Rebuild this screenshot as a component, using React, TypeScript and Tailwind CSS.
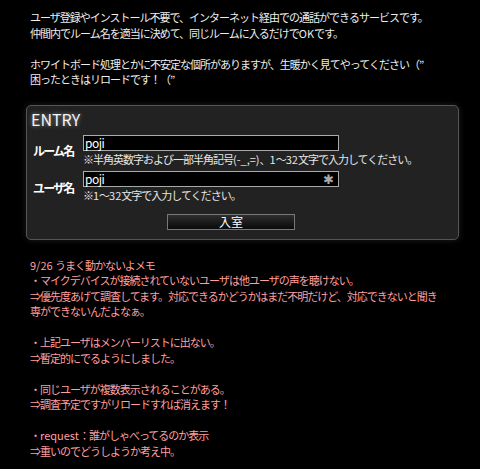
import React from "react";

const topLines = [
  "ユーザ登録やインストール不要で、インターネット経由での通話ができるサービスです。",
  "仲間内でルーム名を適当に決めて、同じルームに入るだけでOKです。",
  "",
  "ホワイトボード処理とかに不安定な個所がありますが、生暖かく見てやってください（”",
  "困ったときはリロードです！（”",
];

const memoLines = [
  "9/26 うまく動かないよメモ",
  "・マイクデバイスが接続されていないユーザは他ユーザの声を聴けない。",
  "⇒優先度あげて調査してます。対応できるかどうかはまだ不明だけど、対応できないと聞き",
  "専ができないんだよなぁ。",
  "",
  "・上記ユーザはメンバーリストに出ない。",
  "⇒暫定的にでるようにしました。",
  "",
  "・同じユーザが複数表示されることがある。",
  "⇒調査予定ですがリロードすれば消えます！",
  "",
  "・request：誰がしゃべってるのか表示",
  "⇒重いのでどうしようか考え中。",
];

function T({ text }: { text: string }) {
  const parts = text.match(/[\x20-\x7e]+|[^\x20-\x7e]+/g) || [];
  return (
    <>
      {parts.map((p, i) =>
        /^[\x20-\x7e]+$/.test(p) ? (
          <span key={i} className="tracking-[0px]">
            {p}
          </span>
        ) : (
          <span key={i}>{p}</span>
        )
      )}
    </>
  );
}

export default function App() {
  return (
    <div className="w-[480px] h-[469px] overflow-hidden bg-black font-['Noto_Sans_CJK_JP',sans-serif] text-[11px] leading-[15.5px] tracking-[-1px]">
      <div className="pt-[10px] pl-[30px] text-[#eeeeee]">
        {topLines.map((l, i) => (
          <div key={i} className="whitespace-nowrap h-[15.5px]">
            <T text={l} />
          </div>
        ))}
      </div>

      <div className="ml-[26px] mt-[17px] w-[433px] h-[135px] rounded-[5px] border border-[#555] bg-[#222] shadow-[0_0_6px_rgba(255,255,255,0.12)] pt-[3px] pl-[6px]">
        <div className="ml-[-2px] h-[20px] leading-[20px] text-[16px] tracking-normal text-[#f4f4f4] [text-shadow:0_0_4px_rgba(255,255,255,0.5)]">
          ENTRY
        </div>
        <div className="mt-[6px] grid grid-cols-[50px_1fr] gap-y-[4px]">
          <div className="flex items-center font-bold text-white text-[12px] tracking-[-1.8px]">ルーム名</div>
          <div className="flex flex-col">
            <div className="w-[256px] h-[16px] border border-[#aaa] bg-black text-white text-[12px] leading-[14px] pl-[1px] tracking-[-0.5px]">
              poji
            </div>
            <div className="mt-[1px] text-[#e6e6e6] whitespace-nowrap">
              <T text="※半角英数字および一部半角記号(-_,=)、1～32文字で入力してください。" />
            </div>
          </div>
          <div className="flex items-center font-bold text-white text-[12px] tracking-[-1.8px]">ユーザ名</div>
          <div className="flex flex-col">
            <div className="relative w-[256px] h-[16px] border border-[#aaa] bg-black text-white text-[12px] leading-[14px] pl-[1px] tracking-[-0.5px]">
              poji
              <span className="absolute right-[5px] top-0 text-[13px] leading-[14px] text-[#aaa]">✱</span>
            </div>
            <div className="mt-[1px] text-[#e6e6e6] whitespace-nowrap">
              <T text="※1～32文字で入力してください。" />
            </div>
          </div>
        </div>
        <div className="mt-[10px] ml-[134px] w-[128px] h-[16px] border border-[#777] bg-gradient-to-b from-[#2e2e2e] to-[#0a0a0a] text-white text-[12px] text-center leading-[14px] tracking-normal">
          入室
        </div>
      </div>

      <div className="mt-[18px] pl-[30px] text-[#ff9f9f]">
        {memoLines.map((l, i) => (
          <div key={i} className="whitespace-nowrap h-[15.5px]">
            <T text={l} />
          </div>
        ))}
      </div>
    </div>
  );
}
